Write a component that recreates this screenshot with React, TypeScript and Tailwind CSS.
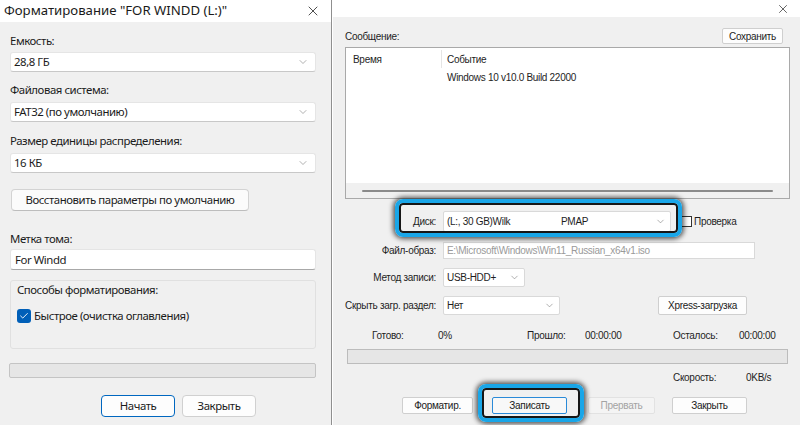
import { ChevronDown, X, Check } from "lucide-react";

const LEFT_FONT = "font-['Noto_Sans','Open_Sans',sans-serif]";
const RIGHT_FONT = "font-['Liberation_Sans',Arial,sans-serif]";

function WinSelect({ value, top }: { value: string; top: string }) {
  return (
    <div className={`${top} h-[20px] bg-white rounded-[3px] border border-[#e5e5e5] border-b-[#c8c8c8] flex items-center justify-between pl-[3px] pr-[6px] text-[#1b1b1b]`}>
      <span>{value}</span>
      <ChevronDown className="w-[12px] h-[12px] text-[#7a7a7a]" strokeWidth={1.2} />
    </div>
  );
}

function OldSelect({ children, w }: { children: React.ReactNode; w: string }) {
  return (
    <div className={`${w} h-full bg-white border border-[#d9d9d9] rounded-[2px] flex items-center justify-between pl-[3px] pr-[4px]`}>
      <div className="flex items-center">{children}</div>
      <ChevronDown className="w-[11px] h-[11px] text-[#707070]" strokeWidth={1.2} />
    </div>
  );
}

function OldButton({ label, w, focused, disabled }: { label: string; w: string; focused?: boolean; disabled?: boolean }) {
  return (
    <div
      className={`${w} h-full rounded-[2px] flex items-center justify-center border whitespace-nowrap ${
        focused ? "border-[#2a8ad8] bg-[#f8f8f8]" : disabled ? "border-[#e2e2e2] bg-[#f4f4f4]" : "border-[#cfcfcf] bg-[#fdfdfd]"
      } ${disabled ? "text-[#a3a3a3]" : "text-[#1a1a1a]"}`}
    >
      {label}
    </div>
  );
}

function Highlight({ className }: { className: string }) {
  return (
    <div
      className={`absolute ${className} rounded-[8px] border-[4px] border-[#19a6e8] shadow-[0_0_5px_2px_rgba(0,0,0,0.65),inset_0_0_0_2px_#161616] pointer-events-none`}
    />
  );
}

export default function App() {
  return (
    <div className="relative w-[800px] h-[425px] flex overflow-hidden bg-[#f0f0f0] whitespace-nowrap">
      {/* Format dialog */}
      <div className={`w-[331px] h-full flex flex-col bg-[#f0f0f0] ${LEFT_FONT}`}>
        <div className="h-[22px] bg-white flex items-center justify-between pl-[4px] pr-[10px]">
          <span className="text-[13.2px] text-[#1a1a1a]">Форматирование "FOR WINDD (L:)"</span>
          <X className="w-[16px] h-[16px] text-[#333]" strokeWidth={1.3} />
        </div>
        <div className="flex flex-col pl-[10px] pr-[15px] text-[11.4px] tracking-[-0.45px] text-[#1b1b1b]">
          <div className="mt-[11px] h-[16px] leading-[16px]">Емкость:</div>
          <WinSelect top="mt-[3px]" value="28,8 ГБ" />
          <div className="mt-[10px] h-[16px] leading-[16px]">Файловая система:</div>
          <WinSelect top="mt-[4px]" value="FAT32 (по умолчанию)" />
          <div className="mt-[11px] h-[16px] leading-[16px]">Размер единицы распределения:</div>
          <WinSelect top="mt-[4px]" value="16 КБ" />
          <div className="mt-[16px] ml-[1px] w-[238px] h-[22px] rounded-[4px] bg-[#fbfbfb] border border-[#d3d3d3] border-b-[#bdbdbd] flex items-center justify-center">
            Восстановить параметры по умолчанию
          </div>
          <div className="mt-[20px] h-[16px] leading-[16px]">Метка тома:</div>
          <div className="mt-[2px] h-[21px] bg-white border border-[#e5e5e5] border-b-[#a8a8a8] rounded-[3px] flex items-center pl-[4px]">For Windd</div>
          <div className="mt-[10px] h-[69px] border border-[#e0e0e0] rounded-[3px] flex flex-col pl-[6px]">
            <div className="mt-[1px] h-[16px] leading-[16px]">Способы форматирования:</div>
            <div className="mt-[9px] flex items-center gap-[3px]">
              <div className="w-[14px] h-[14px] rounded-[3px] bg-[#005fb8] flex items-center justify-center">
                <Check className="w-[10px] h-[10px] text-white" strokeWidth={2.2} />
              </div>
              <span>Быстрое (очистка оглавления)</span>
            </div>
          </div>
          <div className="mt-[14px] -ml-[1px] h-[15px] bg-[#e6e6e6] border border-[#c4c4c4] rounded-[2px]" />
          <div className="mt-[17px] flex gap-[7px] pl-[91px]">
            <div className="w-[74px] h-[22px] rounded-[4px] bg-[#fdfdfd] border border-[#0067c0] flex items-center justify-center">Начать</div>
            <div className="w-[74px] h-[22px] rounded-[4px] bg-[#fdfdfd] border border-[#d0d0d0] flex items-center justify-center">Закрыть</div>
          </div>
        </div>
      </div>

      <div className="w-[1px] h-full bg-[#8f8f8f]" />
      <div className="w-[1px] h-full bg-white" />

      {/* Rufus-like window */}
      <div className={`flex-1 h-full flex flex-col bg-[#f0f0f0] text-[10px] tracking-[-0.3px] text-[#1e1e1e] ${RIGHT_FONT}`}>
        <div className="h-[17px] bg-white flex items-center justify-end pr-[10px]">
          <X className="w-[14px] h-[14px] text-[#333]" strokeWidth={1.3} />
        </div>
        <div className="mt-[11px] h-[16px] pl-[12px] pr-[17px] flex items-end justify-between">
          <span className="leading-[14px]">Сообщение:</span>
          <div className="w-[61px] h-[16px] border border-[#cfcfcf] bg-[#fdfdfd] rounded-[2px] flex items-center justify-center">Сохранить</div>
        </div>
        <div className="mt-[3px] ml-[12px] mr-[10px] h-[152px] bg-white border border-[#a9a9a9] flex flex-col">
          <div className="h-[22px] flex items-center">
            <span className="w-[95px] pl-[7px]">Время</span>
            <div className="w-[1px] h-[18px] bg-[#e5e5e5]" />
            <span className="pl-[5px]">Событие</span>
          </div>
          <div className="h-[14px] flex items-center pl-[101px]">Windows 10 v10.0 Build 22000</div>
          <div className="flex-1" />
          <div className="h-[15px] bg-[#f0f0f0] flex items-center px-[16px]">
            <div className="w-full h-[2px] bg-[#8a8a8a] rounded-full" />
          </div>
        </div>

        {/* Disk row */}
        <div className="mt-[12px] h-[21px] flex items-center">
          <span className="w-[103px] text-right">Диск:</span>
          <div className="ml-[7px] h-full">
            <OldSelect w="w-[228px]">
              <span className="w-[114px]">(L:, 30 GB)Wilk</span>
              <span>PMAP</span>
            </OldSelect>
          </div>
          <div className="ml-[10px] w-[11px] h-[11px] border border-[#333] bg-white" />
          <span className="ml-[2px]">Проверка</span>
        </div>

        <div className="mt-[10px] h-[17px] flex items-center">
          <span className="w-[103px] text-right">Файл-образ:</span>
          <div className="ml-[7px] w-[312px] h-full bg-white border border-[#d9d9d9] flex items-center pl-[3px] text-[#9a9a9a]">
            E:\Microsoft\Windows\Win11_Russian_x64v1.iso
          </div>
        </div>

        <div className="mt-[9px] h-[19px] flex items-center">
          <span className="w-[103px] text-right">Метод записи:</span>
          <div className="ml-[7px] h-full">
            <OldSelect w="w-[82px]">
              <span>USB-HDD+</span>
            </OldSelect>
          </div>
        </div>

        <div className="mt-[9px] h-[19px] flex items-center">
          <span className="w-[103px] text-right">Скрыть загр. раздел:</span>
          <div className="ml-[7px] h-full">
            <OldSelect w="w-[117px]">
              <span>Нет</span>
            </OldSelect>
          </div>
          <div className="ml-[98px] h-full">
            <OldButton label="Xpress-загрузка" w="w-[89px]" />
          </div>
        </div>

        <div className="mt-[12px] h-[16px] flex items-center">
          <span className="ml-[39px] w-[66px]">Готово:</span>
          <span className="w-[89px]">0%</span>
          <span className="w-[58px]">Прошло:</span>
          <span className="w-[88px]">00:00:00</span>
          <span className="w-[66px]">Осталось:</span>
          <span>00:00:00</span>
        </div>

        <div className="mt-[6px] ml-[14px] mr-[12px] h-[15px] bg-[#e6e6e6] border border-[#bcbcbc]" />

        <div className="mt-[5px] h-[16px] flex items-center">
          <span className="ml-[340px] w-[73px]">Скорость:</span>
          <span>0KB/s</span>
        </div>

        <div className="mt-[12px] h-[17px] flex items-center pl-[69px]">
          <OldButton label="Форматир." w="w-[71px]" />
          <div className="ml-[19px] h-full">
            <OldButton label="Записать" w="w-[75px]" focused />
          </div>
          <div className="ml-[21px] h-full">
            <OldButton label="Прервать" w="w-[67px]" disabled />
          </div>
          <div className="ml-[17px] h-full">
            <OldButton label="Закрыть" w="w-[75px]" />
          </div>
        </div>
      </div>

      <Highlight className="left-[395px] top-[199px] w-[287px] h-[38px]" />
      <Highlight className="left-[478px] top-[384px] w-[106px] h-[38px]" />
    </div>
  );
}
